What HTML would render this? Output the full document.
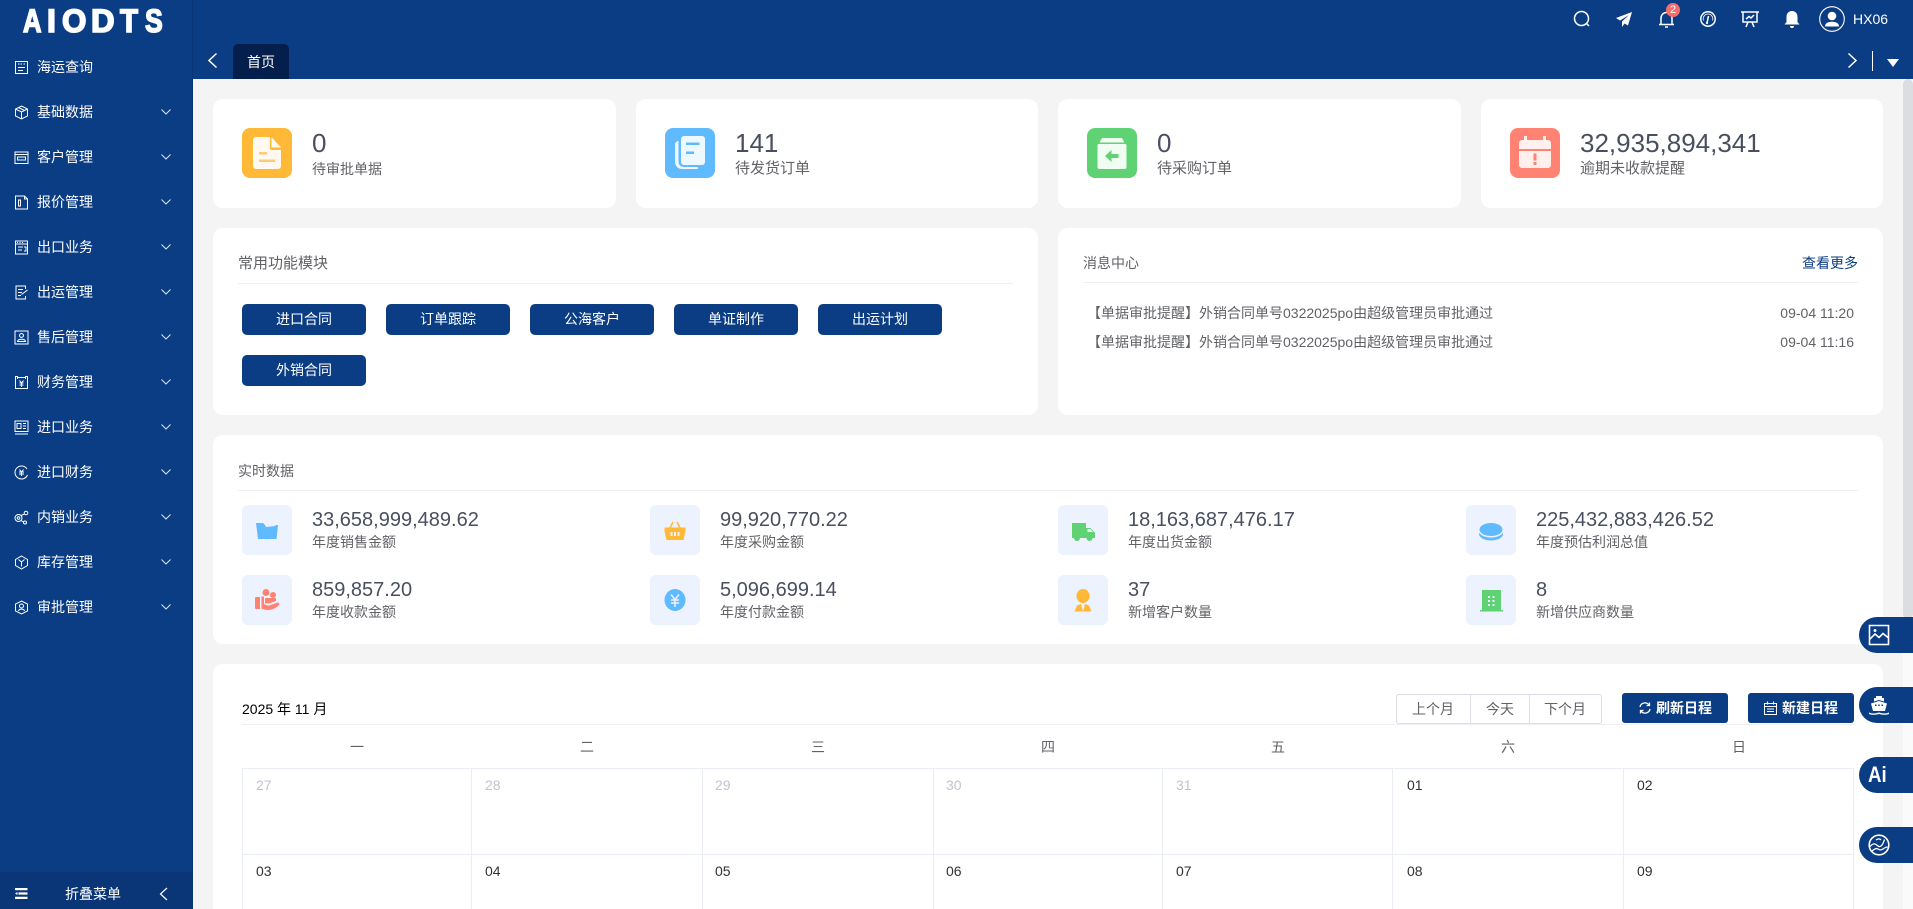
<!DOCTYPE html>
<html lang="zh-CN"><head><meta charset="utf-8"><title>AIODTS</title>
<style>
*{box-sizing:border-box;margin:0;padding:0}
html,body{width:1913px;height:909px;overflow:hidden;background:#f4f4f4}
body{position:relative;font-family:"Liberation Sans","WenQuanYi Zen Hei","Noto Sans CJK SC",sans-serif;font-size:14px;color:#606266}
.a{position:absolute}
.t{position:absolute;white-space:nowrap;line-height:20px;height:20px}
.card{position:absolute;background:#fff;border-radius:10px}
.side{position:absolute;left:0;top:0;width:193px;height:909px;background:#0b3d85;border-right:1px solid #0a3678;color:#fff}
.side .t{color:#fff;left:37px}
.side svg.i{position:absolute;left:14px;width:15px;height:15px;fill:none;stroke:#fff;stroke-width:1}
.side svg.c{position:absolute;left:161px;width:10px;height:6px;fill:none;stroke:#dbe6f5;stroke-width:1}
.logo span{position:absolute;top:4px;font:bold 32px/34px "Liberation Sans",sans-serif;color:#fff;-webkit-text-stroke:1.6px #fff;transform-origin:left center}
.top{position:absolute;left:193px;top:0;width:1720px;height:79px;background:#0b3d85}
.ti{position:absolute;fill:none;stroke:#fff;stroke-width:1.5}
.num{position:absolute;white-space:nowrap;font-size:26px;line-height:30px;color:#4a4f5f}
.lab{position:absolute;white-space:nowrap;line-height:20px;color:#606266}
.ic{position:absolute;width:50px;height:50px;border-radius:8px}
.ic svg,.sic svg{position:absolute;left:0;top:0;width:50px;height:50px}
.hd{position:absolute;font-size:14px;line-height:20px;color:#606266;white-space:nowrap}
.ln{position:absolute;height:1px;background:#eeeef5}
.btn{position:absolute;width:124px;height:31px;background:#0b3d85;border-radius:5px;color:#fff;text-align:center;line-height:31px;font-size:14px}
.sic{position:absolute;width:50px;height:50px;border-radius:6px;background:#ecf2fe}
.sn{position:absolute;white-space:nowrap;font-size:20px;line-height:24px;color:#4a4f5f}
.sl{position:absolute;white-space:nowrap;font-size:14px;line-height:20px;color:#606266}
.wk{position:absolute;top:737px;width:230px;text-align:center;line-height:20px;color:#606266}
.d{position:absolute;line-height:20px;color:#303133}
.d.g{color:#c0c4cc}
.v{position:absolute;top:768px;width:1px;height:141px;background:#ebedf5}
.f{position:absolute;left:1859px;width:54px;height:36px;background:#0b3d85;border-radius:18px 0 0 18px}
.f svg{position:absolute;left:9px;top:7px;width:22px;height:22px;fill:none;stroke:#fff;stroke-width:1.6}
.pb{position:absolute;top:693px;width:106px;height:30px;background:#0b3d85;border-radius:3px;color:#fff;font-weight:bold;line-height:30px}
</style></head>
<body>

<div class="side">
  <div class="logo">
    <span style="left:23px;transform:scaleX(.8)">A</span><span style="left:47px">I</span><span style="left:62px;transform:scaleX(.98)">O</span><span style="left:91px;transform:scaleX(1.02)">D</span><span style="left:120px;transform:scaleX(.92)">T</span><span style="left:145px;transform:scaleX(.83)">S</span>
  </div>

  <svg class="i" style="top:60px" viewBox="0 0 15 15"><path d="M1.500 1.500h12v12h-12zM4 4h1.500M6.500 4H8M9.500 4H11M4 7.500h7M4 10.500h5"/></svg>
  <div class="t" style="top:57px">海运查询</div>

  <svg class="i" style="top:105px" viewBox="0 0 15 15"><path d="M7.500 1 13.500 4v7L7.500 14 1.500 11V4zM1.500 4l6 3 6-3M7.500 7v7M4.500 2.500l6 3"/></svg>
  <div class="t" style="top:102px">基础数据</div>
  <svg class="c" style="top:109px" viewBox="0 0 10 6"><path d="M.5.5 5 5 9.500.5"/></svg>

  <svg class="i" style="top:150px" viewBox="0 0 15 15"><path d="M1 2h13v11.500H1zM1 4.500h13M3.500 7h8v3h-8z"/></svg>
  <div class="t" style="top:147px">客户管理</div>
  <svg class="c" style="top:154px" viewBox="0 0 10 6"><path d="M.5.5 5 5 9.500.5"/></svg>

  <svg class="i" style="top:195px" viewBox="0 0 15 15"><path d="M1.500 1h9l3 3v10h-12zM10.500 1v3h3M4.500 5h2v6h-2z"/></svg>
  <div class="t" style="top:192px">报价管理</div>
  <svg class="c" style="top:199px" viewBox="0 0 10 6"><path d="M.5.5 5 5 9.500.5"/></svg>

  <svg class="i" style="top:240px" viewBox="0 0 15 15"><path d="M1.500 1h12v13h-12zM1.500 4h12M3 2.500h1M5.500 2.500h1M8 2.500h1M4 7h5M4 10h4M10 7h2v4h-2"/></svg>
  <div class="t" style="top:237px">出口业务</div>
  <svg class="c" style="top:244px" viewBox="0 0 10 6"><path d="M.5.5 5 5 9.500.5"/></svg>

  <svg class="i" style="top:285px" viewBox="0 0 15 15"><path d="M11.500 4V1h-9.500v13h9.500v-3M4 4.500h5M4 7.500h4M4 10.500h3M7.500 9.500l6-4.500"/></svg>
  <div class="t" style="top:282px">出运管理</div>
  <svg class="c" style="top:289px" viewBox="0 0 10 6"><path d="M.5.5 5 5 9.500.5"/></svg>

  <svg class="i" style="top:330px" viewBox="0 0 15 15"><path d="M1 1h13v13H1zM7.500 3.500a2 2 0 1 0 .01 0zM3.500 11.500c.5-3 7.500-3 8 0z"/></svg>
  <div class="t" style="top:327px">售后管理</div>
  <svg class="c" style="top:334px" viewBox="0 0 10 6"><path d="M.5.5 5 5 9.500.5"/></svg>

  <svg class="i" style="top:375px" viewBox="0 0 15 15"><path d="M3.500 1.500h-2v12h12v-12h-2M3.500 1v3M11.500 1v3M3.500 2.500h8M5.500 5.500l2 2.500 2-2.500M5.500 8h4M5.500 10h4M7.500 8v4"/></svg>
  <div class="t" style="top:372px">财务管理</div>
  <svg class="c" style="top:379px" viewBox="0 0 10 6"><path d="M.5.5 5 5 9.500.5"/></svg>

  <svg class="i" style="top:420px" viewBox="0 0 15 15"><path d="M1 1h13v10.500H1zM1 14h13M3 3.500h4v5H3zM9 3.500h3M9 6h3M9 8.500h3"/></svg>
  <div class="t" style="top:417px">进口业务</div>
  <svg class="c" style="top:424px" viewBox="0 0 10 6"><path d="M.5.5 5 5 9.500.5"/></svg>

  <svg class="i" style="top:465px" viewBox="0 0 15 15"><path d="M13 4A6.500 6.500 0 1 0 13.500 10M5.500 4.500l2 2.500 2-2.500M5 7h5M5 9h5M7.500 7v4"/></svg>
  <div class="t" style="top:462px">进口财务</div>
  <svg class="c" style="top:469px" viewBox="0 0 10 6"><path d="M.5.5 5 5 9.500.5"/></svg>

  <svg class="i" style="top:510px" viewBox="0 0 15 15"><circle cx="4.500" cy="8" r="3.500"/><circle cx="4.500" cy="8" r="1.300"/><circle cx="12" cy="3" r="1.800"/><circle cx="11" cy="12.500" r="1.500"/><path d="M7 5.500l3.500-1.500M7 10.500l2.500 1.500"/></svg>
  <div class="t" style="top:507px">内销业务</div>
  <svg class="c" style="top:514px" viewBox="0 0 10 6"><path d="M.5.5 5 5 9.500.5"/></svg>

  <svg class="i" style="top:555px" viewBox="0 0 15 15"><path d="M7.500 1 13.500 4.500v6L7.500 14 1.500 10.500v-6zM4.500 4.500l3 2.500 3-2.500M7.500 7v4.500"/></svg>
  <div class="t" style="top:552px">库存管理</div>
  <svg class="c" style="top:559px" viewBox="0 0 10 6"><path d="M.5.5 5 5 9.500.5"/></svg>

  <svg class="i" style="top:600px" viewBox="0 0 15 15"><path d="M7.500 1 13.500 4v7L7.500 14 1.500 11V4z"/><circle cx="7.500" cy="6" r="2"/><path d="M4.500 11c.5-2.500 5.500-2.500 6 0"/></svg>
  <div class="t" style="top:597px">审批管理</div>
  <svg class="c" style="top:604px" viewBox="0 0 10 6"><path d="M.5.5 5 5 9.500.5"/></svg>

  <div class="a" style="left:0;top:872px;width:192px;height:37px;background:#0a3678"></div>
  <svg class="a" style="left:15px;top:888px" width="13" height="11" viewBox="0 0 13 11"><path fill="#fff" d="M0 0h12.500v2.200H0zM3.500 4.400h9v2.200h-9zM0 8.800h12.500V11H0zM0 5.500l2.500-1.500v3z"/></svg>
  <div class="t" style="left:65px;top:884px">折叠菜单</div>
  <svg class="a" style="left:159px;top:887px" width="9" height="14" viewBox="0 0 9 14" fill="none" stroke="#fff" stroke-width="1.200"><path d="M8 1 1.500 7 8 13"/></svg>
</div>

<div class="top"></div>
<svg class="a" style="left:207px;top:52px" width="11" height="17" viewBox="0 0 11 17" fill="none" stroke="#fff" stroke-width="1.500"><path d="M9.500 1.500 2 8.500l7.500 7"/></svg>
<div class="a" style="left:233px;top:44px;width:56px;height:35px;background:#051f4d;border-radius:5px 5px 0 0;color:#fff;text-align:center;line-height:36px">首页</div>

<svg class="ti" style="left:1573px;top:10px" width="18" height="18" viewBox="0 0 18 18"><circle cx="8.500" cy="8.500" r="7"/><path d="M13.500 13.500 16 16"/></svg>
<svg class="a" style="left:1616px;top:12px" width="16" height="15" viewBox="0 0 16 15"><path fill="#fff" d="M16 0 0 6l4 2.500L13 3 6 9.500V15l2.500-3.500 3.500 2z"/></svg>
<svg class="ti" style="left:1658px;top:11px" width="17" height="17" viewBox="0 0 17 17" stroke-width="1.200"><path d="M1 13.500h15M3 13.500V7a5.500 5.500 0 0 1 11 0v6.500M7 16h3"/></svg>
<div class="a" style="left:1666px;top:3px;width:14px;height:14px;border-radius:50%;background:#f56c6c;color:#fff;font-size:11px;line-height:14px;text-align:center">2</div>
<svg class="ti" style="left:1700px;top:11px" width="16" height="16" viewBox="0 0 16 16" stroke-width="1.200"><circle cx="8" cy="8" r="7.200"/><path stroke-width=".8" d="M3.500 9.500a4.800 4.800 0 1 1 9 0"/><path d="M7 12 8.500 5" stroke-width="1.500"/><circle cx="7" cy="12" r="1.100" fill="#fff" stroke="none"/></svg>
<svg class="ti" style="left:1741px;top:11px" width="18" height="17" viewBox="0 0 18 17" stroke-width="1.200"><path d="M0 1h18M2 1v10h14V1M5 16l2-5M13 16l-2-5M5 8l3-2.500 2 1.500 3-3"/></svg>
<svg class="a" style="left:1784px;top:11px" width="16" height="17" viewBox="0 0 16 17"><path fill="#fff" d="M8 0c3.500 0 5.500 2.500 5.500 6v5l2 2.500H.5L2.500 11V6C2.500 2.500 4.500 0 8 0zM6 15h4a2 2 0 0 1-4 0z"/></svg>
<svg class="a" style="left:1819px;top:6px" width="26" height="26" viewBox="0 0 26 26"><circle cx="13" cy="13" r="12.300" fill="none" stroke="#fff" stroke-width="1.100"/><circle cx="13" cy="10" r="4.300" fill="#fff"/><path fill="#fff" d="M6 20.500c0-3 2.500-4.800 7-4.800s7 1.800 7 4.800z"/></svg>
<div class="t" style="left:1853px;top:9px;color:#fff">HX06</div>
<svg class="a" style="left:1847px;top:52px" width="11" height="17" viewBox="0 0 11 17" fill="none" stroke="#fff" stroke-width="1.500"><path d="M1.500 1.500 9 8.500l-7.500 7"/></svg>
<div class="a" style="left:1872px;top:51px;width:1px;height:20px;background:#fff"></div>
<svg class="a" style="left:1887px;top:59px" width="12" height="8" viewBox="0 0 12 8"><path fill="#fff" d="M0 0h12L6 8z"/></svg>

<!-- scrollbar -->
<div class="a" style="left:1903px;top:79px;width:10px;height:830px;background:#fafafa"></div>
<div class="a" style="left:1903px;top:79px;width:10px;height:540px;background:#dcdde0;border-radius:5px"></div>

<!-- row 1 -->
<div class="card" style="left:213px;top:99px;width:403px;height:109px"></div>
<div class="card" style="left:636px;top:99px;width:402px;height:109px"></div>
<div class="card" style="left:1058px;top:99px;width:403px;height:109px"></div>
<div class="card" style="left:1481px;top:99px;width:402px;height:109px"></div>

<div class="ic" style="left:242px;top:128px;background:#ffb936"><svg viewBox="0 0 50 50"><path fill="#fff9f0" d="M14 9h14v11a2 2 0 0 0 2 2h9v16a3 3 0 0 1-3 3H14a3 3 0 0 1-3-3V12a3 3 0 0 1 3-3zM29.500 9 39 19.500h-9.500z"/><path fill="#ffc97a" d="M17 24h8v2.500h-8zM17 31.500h16v2.500H17z"/></svg></div>
<div class="num" style="left:312px;top:128px">0</div>
<div class="lab" style="left:312px;top:159px">待审批单据</div>

<div class="ic" style="left:665px;top:128px;background:#60baff"><svg viewBox="0 0 50 50"><path fill="#eef8ff" d="M19 8h18a3 3 0 0 1 3 3v23a3 3 0 0 1-3 3H19a3 3 0 0 1-3-3V11a3 3 0 0 1 3-3z"/><path fill="#eef8ff" d="M13.500 13v21a5 5 0 0 0 5 5H33v2H17a7 7 0 0 1-7-7V16a4 4 0 0 1 3.500-3z"/><path fill="#60baff" d="M21 14.500h13.500V17H21zM21 23.500h8V26h-8z"/></svg></div>
<div class="num" style="left:735px;top:128px">141</div>
<div class="lab" style="left:735px;top:159px;font-size:15px">待发货订单</div>

<div class="ic" style="left:1087px;top:128px;background:#5fd374"><svg viewBox="0 0 50 50"><path fill="#f0fdf2" d="M15 10h20l2.500 4.500h-25zM12 16h26a1.500 1.500 0 0 1 1.500 1.500V39a2 2 0 0 1-2 2h-25a2 2 0 0 1-2-2V17.500A1.500 1.500 0 0 1 12 16z"/><path fill="#5fd374" d="M18 28l6.500-6v4h7v4h-7v4z"/></svg></div>
<div class="num" style="left:1157px;top:128px">0</div>
<div class="lab" style="left:1157px;top:159px;font-size:15px">待采购订单</div>

<div class="ic" style="left:1510px;top:128px;background:#ff8272"><svg viewBox="0 0 50 50"><path fill="#fff0ee" d="M14 8h3v4h16V8h3v4h2a3 3 0 0 1 3 3v6H9v-6a3 3 0 0 1 3-3h2zM9 23h32v14a3 3 0 0 1-3 3H12a3 3 0 0 1-3-3z"/><path fill="#ff8272" d="M23.500 25.500h3v7h-3zM23.500 34h3v3h-3z"/></svg></div>
<div class="num" style="left:1580px;top:128px">32,935,894,341</div>
<div class="lab" style="left:1580px;top:159px;font-size:15px">逾期未收款提醒</div>

<!-- row 2 -->
<div class="card" style="left:213px;top:228px;width:825px;height:187px"></div>
<div class="card" style="left:1058px;top:228px;width:825px;height:187px"></div>
<div class="hd" style="left:238px;top:254px;font-size:15px">常用功能模块</div>
<div class="ln" style="left:238px;top:283px;width:775px"></div>
<div class="btn" style="left:242px;top:304px">进口合同</div>
<div class="btn" style="left:386px;top:304px">订单跟踪</div>
<div class="btn" style="left:530px;top:304px">公海客户</div>
<div class="btn" style="left:674px;top:304px">单证制作</div>
<div class="btn" style="left:818px;top:304px">出运计划</div>
<div class="btn" style="left:242px;top:355px">外销合同</div>

<div class="hd" style="left:1083px;top:253px">消息中心</div>
<div class="hd" style="left:1802px;top:253px;color:#0b3d85">查看更多</div>
<div class="ln" style="left:1083px;top:282px;width:775px"></div>
<div class="hd" style="left:1087px;top:303px">【单据审批提醒】外销合同单号0322025po由超级管理员审批通过</div>
<div class="hd" style="right:59px;top:303px">09-04 11:20</div>
<div class="hd" style="left:1087px;top:332px">【单据审批提醒】外销合同单号0322025po由超级管理员审批通过</div>
<div class="hd" style="right:59px;top:332px">09-04 11:16</div>

<!-- row 3 -->
<div class="card" style="left:213px;top:435px;width:1670px;height:209px"></div>
<div class="hd" style="left:238px;top:461px">实时数据</div>
<div class="ln" style="left:238px;top:490px;width:1620px"></div>

<div class="sic" style="left:242px;top:505px"><svg viewBox="0 0 50 50"><path fill="#60baff" d="M14 18h7l2 2h13l-1.500 14H16z"/><path fill="#ecf2fe" d="M23 20l10-1 .5 2-9.500 1z"/></svg></div>
<div class="sn" style="left:312px;top:508px">33,658,999,489.62</div>
<div class="sl" style="left:312px;top:532px">年度销售金额</div>

<div class="sic" style="left:650px;top:505px"><svg viewBox="0 0 50 50"><path fill="none" stroke="#ffb936" stroke-width="1.500" d="M20 23l3-6M30 23l-3-6"/><path fill="#ffb936" d="M14.500 22.500h21V26l-2 9h-17l-2-9z"/><path fill="#ecf2fe" d="M20.500 27h2v4h-2zM24 27h2v4h-2zM27.500 27h2v4h-2z"/></svg></div>
<div class="sn" style="left:720px;top:508px">99,920,770.22</div>
<div class="sl" style="left:720px;top:532px">年度采购金额</div>

<div class="sic" style="left:1058px;top:505px"><svg viewBox="0 0 50 50"><path fill="#5fd374" d="M14 18h14v5h4.500l4.500 5v5h-2.500a3 3 0 0 1-6 0H22a3 3 0 0 1-6 0h-2z"/><path fill="#ecf2fe" d="M29.500 24h3l2.500 3h-5.500z"/></svg></div>
<div class="sn" style="left:1128px;top:508px">18,163,687,476.17</div>
<div class="sl" style="left:1128px;top:532px">年度出货金额</div>

<div class="sic" style="left:1466px;top:505px"><svg viewBox="0 0 50 50"><ellipse cx="25" cy="29" rx="12" ry="6.500" fill="#60baff"/><ellipse cx="25" cy="25.500" rx="12.500" ry="7" fill="#ecf2fe"/><ellipse cx="25" cy="24.500" rx="11.500" ry="6.500" fill="#60baff"/></svg></div>
<div class="sn" style="left:1536px;top:508px">225,432,883,426.52</div>
<div class="sl" style="left:1536px;top:532px">年度预估利润总值</div>

<div class="sic" style="left:242px;top:575px"><svg viewBox="0 0 50 50"><circle cx="24" cy="17.500" r="3.500" fill="#ff8272"/><circle cx="31" cy="20" r="3" fill="#ff8272"/><path fill="#ff8272" d="M14 22h4v12h-4a1 1 0 0 1-1-1V23a1 1 0 0 1 1-1zM19.500 21.500h2.500V28c0 2 3 2.500 5 2.500l9-3c1.500 0 1.500 2 .5 3-3 3-7 4.500-10 4.500-3 0-5-.5-7-1.500z"/><path fill="#ff8272" d="M23 23h11v3l-7 2.500h-4z"/></svg></div>
<div class="sn" style="left:312px;top:578px">859,857.20</div>
<div class="sl" style="left:312px;top:602px">年度收款金额</div>

<div class="sic" style="left:650px;top:575px"><svg viewBox="0 0 50 50"><ellipse cx="25" cy="25" rx="10.500" ry="11" fill="#60baff"/><path fill="none" stroke="#ecf2fe" stroke-width="1.500" d="M21 19.500l4 5 4-5M21 25h8M21 28h8M25 24.500V32"/></svg></div>
<div class="sn" style="left:720px;top:578px">5,096,699.14</div>
<div class="sl" style="left:720px;top:602px">年度付款金额</div>

<div class="sic" style="left:1058px;top:575px"><svg viewBox="0 0 50 50"><ellipse cx="25" cy="21" rx="6.500" ry="7" fill="#ffb936"/><path fill="#ffb936" d="M16.500 36.500l2.500-6 4-1.500 2 7.500 2-7.500 4 1.500 2.500 6z"/></svg></div>
<div class="sn" style="left:1128px;top:578px">37</div>
<div class="sl" style="left:1128px;top:602px">新增客户数量</div>

<div class="sic" style="left:1466px;top:575px"><svg viewBox="0 0 50 50"><path fill="#5fd374" d="M16 15h19v20h-19zM14 35h23v1.500H14z"/><path fill="#ecf2fe" d="M22 21h2v2h-2zM26.500 21h2v2h-2zM22 25h2v2h-2zM26.500 25h2v2h-2zM22 29h2v2h-2zM26.500 29h2v2h-2z"/></svg></div>
<div class="sn" style="left:1536px;top:578px">8</div>
<div class="sl" style="left:1536px;top:602px">新增供应商数量</div>

<!-- row 4 -->
<div class="card" style="left:213px;top:664px;width:1670px;height:260px"></div>
<div class="a" style="left:242px;top:699px;line-height:20px;color:#000;white-space:nowrap">2025 年 11 月</div>
<div class="ln" style="left:242px;top:724px;width:1612px"></div>

<div class="a" style="left:1396px;top:694px;width:206px;height:30px;border:1px solid #dcdfe6;border-radius:3px;background:#fff"></div>
<div class="a" style="left:1470px;top:694px;width:1px;height:30px;background:#dcdfe6"></div>
<div class="a" style="left:1529px;top:694px;width:1px;height:30px;background:#dcdfe6"></div>
<div class="t" style="left:1412px;top:699px">上个月</div>
<div class="t" style="left:1486px;top:699px">今天</div>
<div class="t" style="left:1544px;top:699px">下个月</div>

<div class="pb" style="left:1622px">
  <svg class="a" style="left:17px;top:9px" width="12" height="12" viewBox="0 0 12 12" fill="none" stroke="#fff" stroke-width="1.300"><path d="M1 5a5 5 0 0 1 9-2M11 7a5 5 0 0 1-9 2M10.500 .5V3.500H7.500M1.500 11.500V8.500h3"/></svg>
  <span class="a" style="left:34px">刷新日程</span>
</div>
<div class="pb" style="left:1748px">
  <svg class="a" style="left:16px;top:8px" width="13" height="14" viewBox="0 0 13 14" fill="none" stroke="#fff" stroke-width="1"><path d="M.5 2.500h12v11H.5zM3.500 .5v3M9.500 .5v3M.5 5.500h12M3 8h7M3 10.500h7"/></svg>
  <span class="a" style="left:34px">新建日程</span>
</div>

<div class="wk" style="left:242px">一</div><div class="wk" style="left:472px">二</div><div class="wk" style="left:703px">三</div><div class="wk" style="left:933px">四</div><div class="wk" style="left:1163px">五</div><div class="wk" style="left:1393px">六</div><div class="wk" style="left:1624px">日</div>

<div class="ln" style="left:242px;top:768px;width:1612px;background:#ebedf5"></div>
<div class="ln" style="left:242px;top:854px;width:1612px;background:#ebedf5"></div>
<div class="v" style="left:242px"></div><div class="v" style="left:471px"></div><div class="v" style="left:702px"></div><div class="v" style="left:933px"></div><div class="v" style="left:1162px"></div><div class="v" style="left:1392px"></div><div class="v" style="left:1623px"></div><div class="v" style="left:1853px"></div>

<div class="d g" style="left:256px;top:775px">27</div><div class="d g" style="left:485px;top:775px">28</div><div class="d g" style="left:715px;top:775px">29</div><div class="d g" style="left:946px;top:775px">30</div><div class="d g" style="left:1176px;top:775px">31</div><div class="d" style="left:1407px;top:775px">01</div><div class="d" style="left:1637px;top:775px">02</div>
<div class="d" style="left:256px;top:861px">03</div><div class="d" style="left:485px;top:861px">04</div><div class="d" style="left:715px;top:861px">05</div><div class="d" style="left:946px;top:861px">06</div><div class="d" style="left:1176px;top:861px">07</div><div class="d" style="left:1407px;top:861px">08</div><div class="d" style="left:1637px;top:861px">09</div>

<!-- floats -->
<div class="f" style="top:617px"><svg viewBox="0 0 22 22"><path d="M1.500 1.500h19v19h-19zM2 15l5-5 4 3.500 4-4 5 4"/><circle cx="7" cy="6.500" r="1.500" fill="#fff" stroke="none"/></svg></div>
<div class="f" style="top:687px"><svg viewBox="0 0 22 22"><path fill="#fff" stroke="none" fill-rule="evenodd" d="M8 2h6v2h2v3.500l-5-1.500-5 1.500V4h2zM11 7l8 2.500-2 7.500H5L3 9.500zM7 10.500h1.500V12H7zM10.250 10.500h1.500V12h-1.500zM13.500 10.500H15V12h-1.500zM1 18.500c3 1.300 5.500 1.300 10 0 4.500 1.300 7 1.300 10 0V20c-3 1-5.500 1-10 0-4.500 1-7 1-10 0z"/></svg></div>
<div class="f" style="top:757px"><div class="a" style="left:9px;top:3px;font:bold 22px/30px 'Liberation Sans',sans-serif;color:#fff;transform:scaleX(.85);transform-origin:left">Ai</div></div>
<div class="f" style="top:827px"><svg viewBox="0 0 22 22"><circle cx="11" cy="11" r="9.800"/><path d="M1.500 13c2.500-3 4.500-4 6.500-2.500s3 3 5 1.500 3-5 3.500-6.500M4 17c3-2.500 4.500-3 6-2s3 1.500 5 0 3-2 4.500-2M8 6c2-1.500 4-1.500 5 0" stroke-width="1.300"/></svg></div>

</body></html>
